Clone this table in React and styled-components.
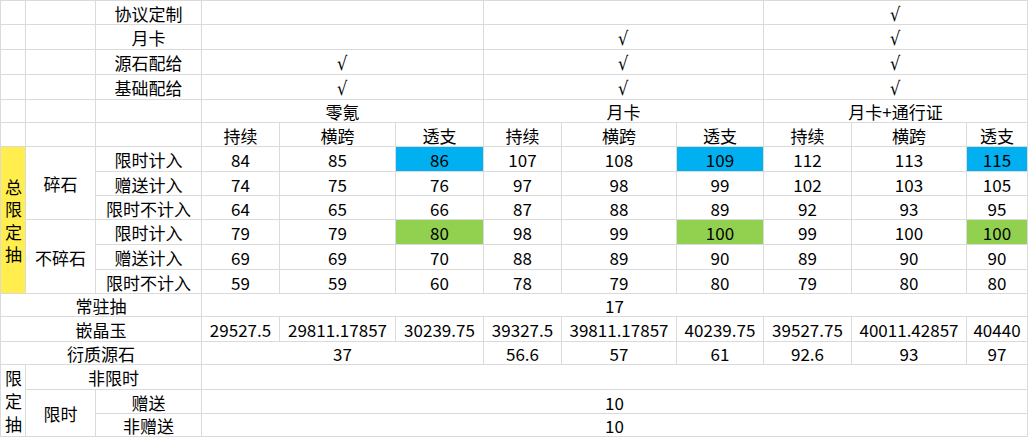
import React from "react";
import styled, { createGlobalStyle } from "styled-components";

const GlobalStyle = createGlobalStyle`
  html, body {
    margin: 0;
    padding: 0;
    background: #ffffff;
  }
  body {
    font-family: "Noto Sans CJK SC", "Noto Sans", sans-serif;
  }
`;

const colWidths = [24, 69, 105, 77, 115, 87, 77, 114, 86, 87, 114, 60];
const rowHeights = [23, 24, 24, 24, 22, 23, 24, 23, 23, 24, 24, 23, 22, 24, 22, 24, 23, 22];

const Sheet = styled.div`
  display: grid;
  grid-template-columns: ${colWidths.map((w) => `${w}px`).join(" ")};
  grid-template-rows: ${rowHeights.map((h) => `${h}px`).join(" ")};
  gap: 1px;
  padding: 1px;
  width: 1028px;
  box-sizing: border-box;
  background: #dadada;
`;

const Cell = styled.div`
  grid-column: ${(p) => p.$col} / span ${(p) => p.$cs || 1};
  grid-row: ${(p) => p.$row} / span ${(p) => p.$rs || 1};
  background: ${(p) => p.$bg || "#ffffff"};
  display: flex;
  align-items: center;
  justify-content: center;
  padding-top: 2px;
  box-sizing: border-box;
  font-size: 17px;
  line-height: 20px;
  color: #000;
  white-space: nowrap;
`;

const Tick = styled.span`
  font-family: "DejaVu Sans", sans-serif;
  font-size: 19px;
  line-height: 20px;
  transform: scaleX(0.85);
`;

const StackedText = styled.div`
  writing-mode: vertical-rl;
  text-orientation: upright;
  font-size: 17px;
  line-height: 20px;
  letter-spacing: ${(p) => p.$spacing}px;
  margin-bottom: -${(p) => p.$spacing}px;
`;

const BLUE = "#00b0f0";
const GREEN = "#92d050";
const YELLOW = "#ffee4e";

const cells = [];
const add = (row, col, text = "", opts = {}) =>
  cells.push({ row, col, text, ...opts });

// header block
const plans = ["协议定制", "月卡", "源石配给", "基础配给"];
const ticks = [
  ["", "", "√"],
  ["", "√", "√"],
  ["√", "√", "√"],
  ["√", "√", "√"],
];
plans.forEach((label, i) => {
  const r = i + 1;
  add(r, 1);
  add(r, 2);
  add(r, 3, label);
  add(r, 4, ticks[i][0], { cs: 3, tick: true });
  add(r, 7, ticks[i][1], { cs: 3, tick: true });
  add(r, 10, ticks[i][2], { cs: 3, tick: true });
});

add(5, 1);
add(5, 2);
add(5, 3);
add(5, 4, "零氪", { cs: 3 });
add(5, 7, "月卡", { cs: 3 });
add(5, 10, "月卡+通行证", { cs: 3 });

add(6, 1);
add(6, 2);
add(6, 3);
["持续", "横跨", "透支", "持续", "横跨", "透支", "持续", "横跨", "透支"].forEach(
  (t, i) => add(6, 4 + i, t)
);

// 总限定抽 block
add(7, 1, "总限定抽", { rs: 6, bg: YELLOW, stack: true, spacing: 5.5 });
add(7, 2, "碎石", { rs: 3 });
add(10, 2, "不碎石", { rs: 3 });

const drawRows = [
  ["限时计入", [84, 85, 86, 107, 108, 109, 112, 113, 115], BLUE],
  ["赠送计入", [74, 75, 76, 97, 98, 99, 102, 103, 105]],
  ["限时不计入", [64, 65, 66, 87, 88, 89, 92, 93, 95]],
  ["限时计入", [79, 79, 80, 98, 99, 100, 99, 100, 100], GREEN],
  ["赠送计入", [69, 69, 70, 88, 89, 90, 89, 90, 90]],
  ["限时不计入", [59, 59, 60, 78, 79, 80, 79, 80, 80]],
];
drawRows.forEach(([label, values, mark], i) => {
  const r = 7 + i;
  add(r, 3, label);
  values.forEach((v, j) => {
    // 透支 columns carry the highlight
    const bg = mark && j % 3 === 2 ? mark : undefined;
    add(r, 4 + j, String(v), { bg });
  });
});

add(13, 1, "常驻抽", { cs: 3 });
add(13, 4, "17", { cs: 9 });

add(14, 1, "嵌晶玉", { cs: 3 });
[
  "29527.5",
  "29811.17857",
  "30239.75",
  "39327.5",
  "39811.17857",
  "40239.75",
  "39527.75",
  "40011.42857",
  "40440",
].forEach((v, j) => add(14, 4 + j, v));

add(15, 1, "衍质源石", { cs: 3 });
add(15, 4, "37", { cs: 3 });
["56.6", "57", "61", "92.6", "93", "97"].forEach((v, j) => add(15, 7 + j, v));

add(16, 1, "限定抽", { rs: 3, stack: true, spacing: 6 });
add(16, 2, "非限时", { cs: 2 });
add(16, 4, "", { cs: 9 });
add(17, 2, "限时", { rs: 2 });
add(17, 3, "赠送");
add(17, 4, "10", { cs: 9 });
add(18, 3, "非赠送");
add(18, 4, "10", { cs: 9 });

export default function App() {
  return (
    <>
      <GlobalStyle />
      <Sheet>
        {cells.map((c) => (
          <Cell
            key={`${c.row}-${c.col}`}
            $row={c.row}
            $col={c.col}
            $rs={c.rs}
            $cs={c.cs}
            $bg={c.bg}
          >
            {c.stack ? (
              <StackedText $spacing={c.spacing}>{c.text}</StackedText>
            ) : c.tick && c.text ? (
              <Tick>{c.text}</Tick>
            ) : (
              c.text
            )}
          </Cell>
        ))}
      </Sheet>
    </>
  );
}
